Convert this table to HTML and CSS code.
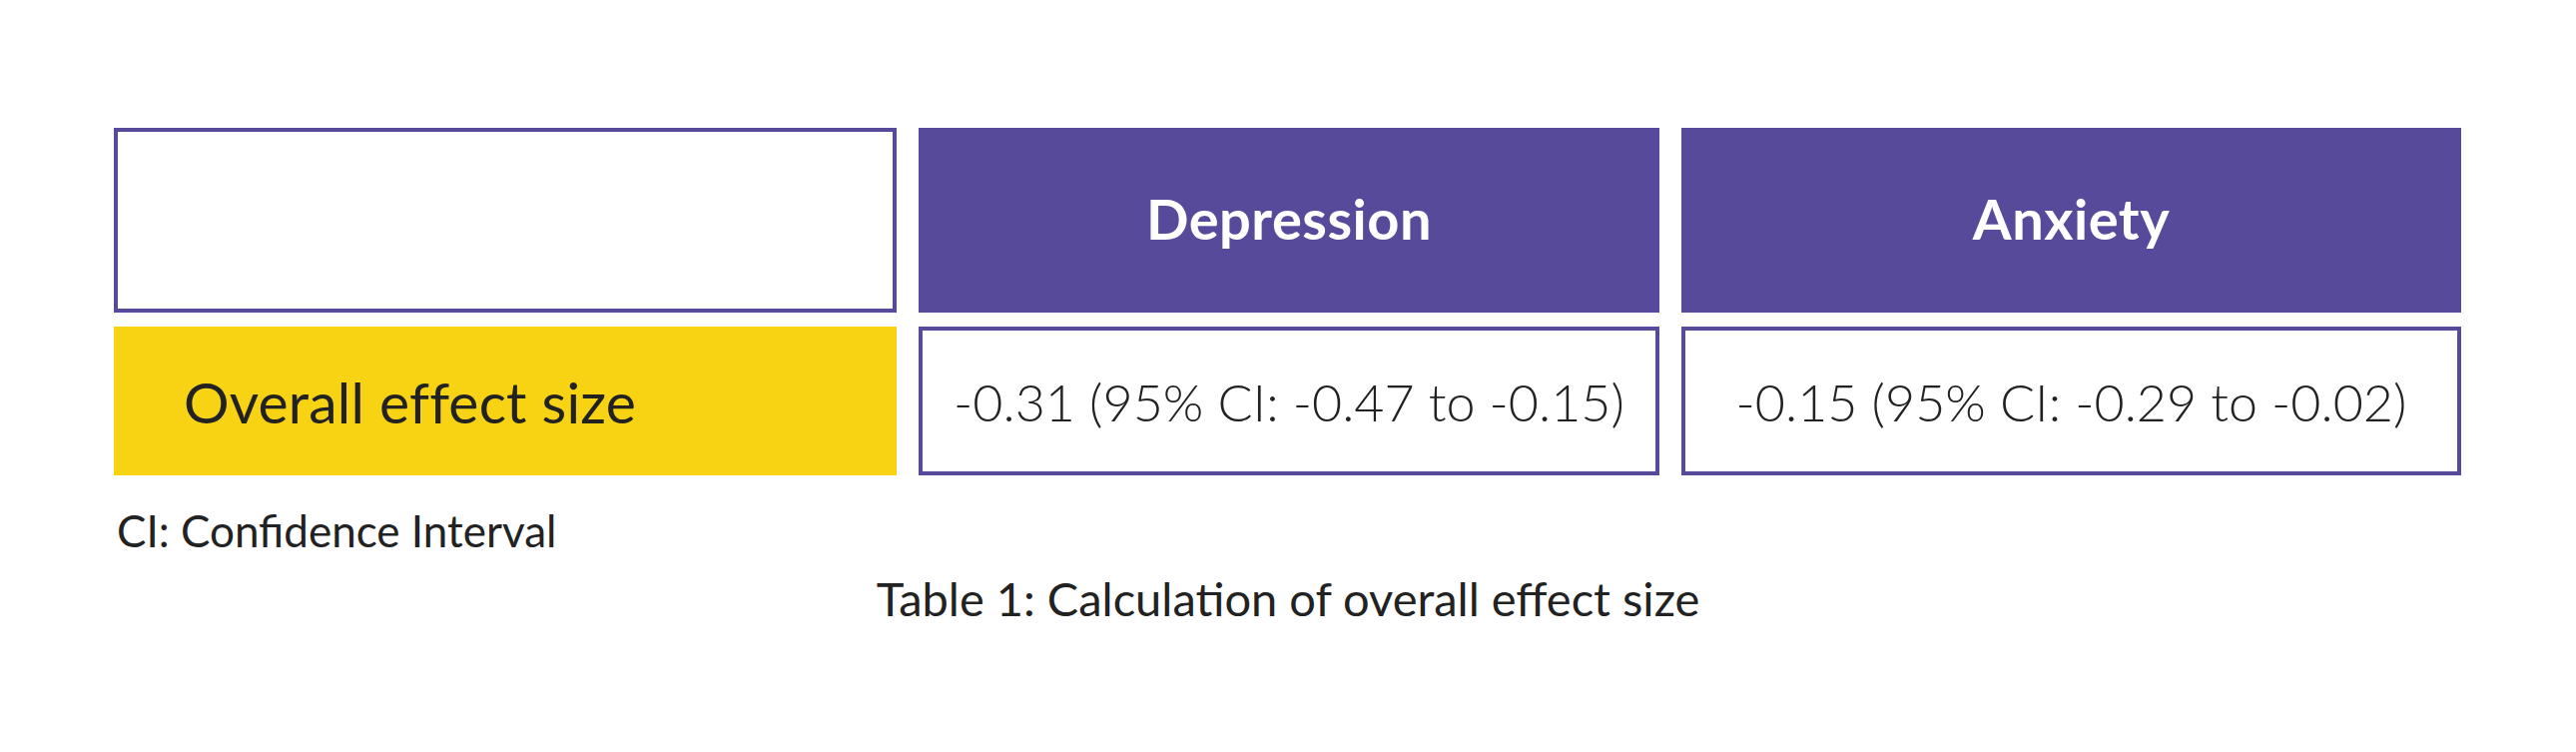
FILE: index.html
```html
<!DOCTYPE html>
<html>
<head>
<meta charset="utf-8">
<link rel="stylesheet" href="styles.css">
</head>
<body>
<div class="wrap">
  <div class="table">
    <div class="cell empty"></div>
    <div class="cell head">Depression</div>
    <div class="cell head">Anxiety</div>
    <div class="cell label">Overall effect size</div>
    <div class="cell value">-0.31 (95% CI: -0.47 to -0.15)</div>
    <div class="cell value">-0.15 (95% CI: -0.29 to -0.02)</div>
  </div>
  <p class="note">CI: Confidence Interval</p>
  <p class="caption">Table 1: Calculation of overall effect size</p>
</div>
</body>
</html>
```
FILE: styles.css
```css
html, body {
  margin: 0;
  padding: 0;
  background: #ffffff;
}
body {
  font-family: "Lato", "Open Sans", sans-serif;
  color: #222222;
}
.wrap {
  width: 2352px;
  margin: 0 auto;
  padding-top: 128px;
}
.table {
  display: grid;
  grid-template-columns: 784px 742px 781px;
  grid-template-rows: 185px 149px;
  column-gap: 22px;
  row-gap: 14px;
}
.cell {
  box-sizing: border-box;
  display: flex;
  align-items: center;
  justify-content: center;
}
.empty {
  border: 4px solid #574a9a;
}
.head {
  background: #574a9a;
  color: #ffffff;
  font-weight: 700;
  font-size: 56px;
  letter-spacing: 0.5px;
  padding-bottom: 4px;
}
.label {
  background: #f8d313;
  justify-content: flex-start;
  padding-left: 70px;
  font-size: 57px;
  font-weight: 400;
  letter-spacing: 0.2px;
}
.value {
  border: 4px solid #574a9a;
  font-size: 52px;
  font-weight: 300;
}
.note {
  margin: 29px 0 0 3px;
  font-size: 44px;
  font-weight: 400;
  line-height: 52px;
}
.caption {
  margin: 16px 0 0 0;
  text-align: center;
  font-size: 47px;
  font-weight: 400;
  line-height: 52px;
}
```
